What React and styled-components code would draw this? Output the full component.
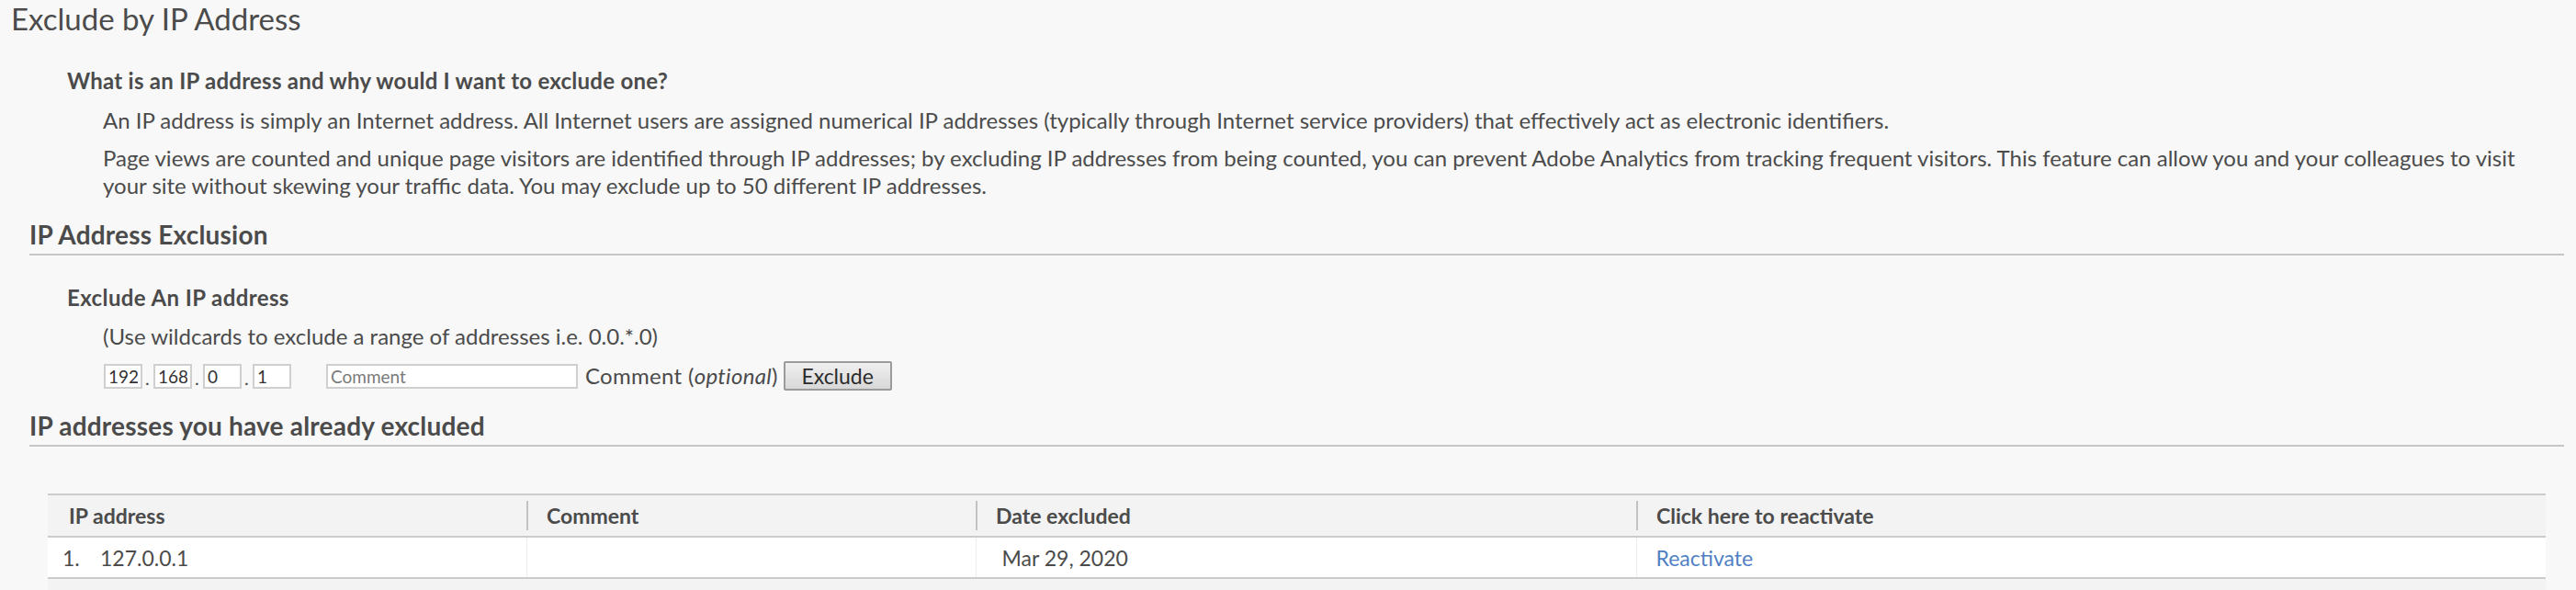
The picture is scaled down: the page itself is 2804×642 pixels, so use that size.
import React from "react";
import styled, { createGlobalStyle } from "styled-components";

const GlobalStyle = createGlobalStyle`
  html, body { margin: 0; padding: 0; background: #f8f8f8; }
  body {
    font-family: Lato, "Open Sans", Arial, sans-serif;
    color: #4b4b4b;
    -webkit-font-smoothing: antialiased;
  }
  * { box-sizing: border-box; }
`;

const Page = styled.div`
  padding: 0 13px 20px 12px;
`;

const Title = styled.h1`
  margin: 0;
  font-size: 33px;
  line-height: 40px;
  font-weight: 400;
  color: #4b4b4b;
`;

const Body = styled.div`
  padding-left: 20px;
`;

const Faq = styled.div`
  margin-top: 33px;
  padding-left: 41px;
`;

const Question = styled.h3`
  margin: 0;
  font-size: 24px;
  line-height: 30px;
  font-weight: 700;
  letter-spacing: 0.25px;
`;

const Answer = styled.p`
  margin: ${(p) => (p.$first ? "13px" : "11px")} 0 0;
  padding: 0 38px 0 39px;
  font-size: 24px;
  line-height: 30px;
`;

const Section = styled.section`
  margin-top: 23px;
`;

const SectionHeading = styled.h2`
  margin: 0;
  padding-bottom: 6px;
  border-bottom: 2px solid #c6c6c6;
  font-size: 28px;
  line-height: 30px;
  font-weight: 700;
  letter-spacing: 0.2px;
`;

const SubBlock = styled.div`
  margin-top: 31px;
  padding-left: 41px;
`;

const SubHeading = styled.h3`
  margin: 0;
  font-size: 24px;
  line-height: 30px;
  font-weight: 700;
  letter-spacing: 0.4px;
`;

const Hint = styled.p`
  margin: 12px 0 0;
  padding-left: 39px;
  font-size: 24px;
  line-height: 30px;
`;

const FormRow = styled.div`
  margin-top: 12px;
  padding-left: 40px;
  display: flex;
  align-items: center;
  height: 32px;
`;

const TextInput = styled.input`
  width: ${(p) => p.$w}px;
  height: 27px;
  margin-left: ${(p) => p.$ml || 0}px;
  padding: 0 3px;
  border: 2px solid #cfcfcf;
  background: #fff;
  font-family: Lato, "Open Sans", Arial, sans-serif;
  font-size: 19px;
  color: #333;
  outline: none;
  &::placeholder { color: #7a7a7a; }
`;

const Dot = styled.span`
  width: 12px;
  padding-left: 3px;
  font-size: 20px;
  line-height: 27px;
  align-self: flex-end;
`;

const Label = styled.span`
  margin-left: 8px;
  font-size: 24px;
  line-height: 30px;
  letter-spacing: 0.3px;
  em { font-style: italic; }
`;

const Button = styled.button`
  margin-left: 6px;
  width: 118px;
  height: 32px;
  border: 2px solid #9b9b9b;
  border-radius: 2px;
  background: linear-gradient(#efefef, #d8d8d8);
  font-family: Lato, "Open Sans", Arial, sans-serif;
  font-size: 23px;
  color: #2c2c2c;
  padding: 0;
`;

const Table = styled.table`
  margin: 51px 20px 0;
  width: calc(100% - 40px);
  border-collapse: collapse;
  table-layout: fixed;
  font-size: 23px;
`;

const HeadCell = styled.th`
  padding: 6px 0;
  background: #f3f3f3;
  border-top: 2px solid #cbcbcb;
  border-bottom: 2px solid #cbcbcb;
  text-align: left;
  font-weight: 700;
`;

const HeadLabel = styled.div`
  display: flex;
  align-items: center;
  height: 32px;
  padding-left: ${(p) => (p.$first ? 21 : 20)}px;
  border-left: 2px solid ${(p) => (p.$first ? "transparent" : "#c2c2c2")};
`;

const Cell = styled.td`
  height: 45px;
  padding: 0 0 0 ${(p) => p.$pl}px;
  background: #fff;
  border-bottom: 2px solid #cbcbcb;
  border-left: ${(p) => (p.$first ? "none" : "1px solid #ededed")};
`;

const Num = styled.span`
  display: inline-block;
  width: 41px;
`;

const FootCell = styled.td`
  height: 24px;
  background: #f3f3f3;
`;

const Link = styled.a`
  color: #5080c4;
  text-decoration: none;
`;

export default function App() {
  return (
    <Page>
      <GlobalStyle />
      <Title>Exclude by IP Address</Title>
      <Body>
        <Faq>
          <Question>What is an IP address and why would I want to exclude one?</Question>
          <Answer $first>
            An IP address is simply an Internet address. All Internet users are assigned numerical IP
            addresses (typically through Internet service providers) that effectively act as electronic
            identifiers.
          </Answer>
          <Answer>
            Page views are counted and unique page visitors are identified through IP addresses; by
            excluding IP addresses from being counted, you can prevent Adobe Analytics from tracking
            frequent visitors. This feature can allow you and your colleagues to visit your site without
            skewing your traffic data. You may exclude up to 50 different IP addresses.
          </Answer>
        </Faq>

        <Section>
          <SectionHeading>IP Address Exclusion</SectionHeading>
          <SubBlock>
            <SubHeading>Exclude An IP address</SubHeading>
            <Hint>(Use wildcards to exclude a range of addresses i.e. 0.0.*.0)</Hint>
            <FormRow>
              <TextInput $w={42} defaultValue="192" />
              <Dot>.</Dot>
              <TextInput $w={42} defaultValue="168" />
              <Dot>.</Dot>
              <TextInput $w={42} defaultValue="0" />
              <Dot>.</Dot>
              <TextInput $w={42} defaultValue="1" />
              <TextInput $w={274} $ml={38} placeholder="Comment" />
              <Label>
                Comment (<em>optional</em>)
              </Label>
              <Button>Exclude</Button>
            </FormRow>
          </SubBlock>
        </Section>

        <Section>
          <SectionHeading>IP addresses you have already excluded</SectionHeading>
          <Table>
            <colgroup>
              <col style={{ width: "521px" }} />
              <col style={{ width: "489px" }} />
              <col style={{ width: "719px" }} />
              <col />
            </colgroup>
            <thead>
              <tr>
                <HeadCell><HeadLabel $first>IP address</HeadLabel></HeadCell>
                <HeadCell><HeadLabel>Comment</HeadLabel></HeadCell>
                <HeadCell><HeadLabel>Date excluded</HeadLabel></HeadCell>
                <HeadCell><HeadLabel>Click here to reactivate</HeadLabel></HeadCell>
              </tr>
            </thead>
            <tbody>
              <tr>
                <Cell $first $pl={16}><Num>1.</Num>127.0.0.1</Cell>
                <Cell $pl={21}></Cell>
                <Cell $pl={28}>Mar 29, 2020</Cell>
                <Cell $pl={21}><Link href="#">Reactivate</Link></Cell>
              </tr>
            </tbody>
            <tfoot>
              <tr>
                <FootCell colSpan={4} />
              </tr>
            </tfoot>
          </Table>
        </Section>
      </Body>
    </Page>
  );
}
